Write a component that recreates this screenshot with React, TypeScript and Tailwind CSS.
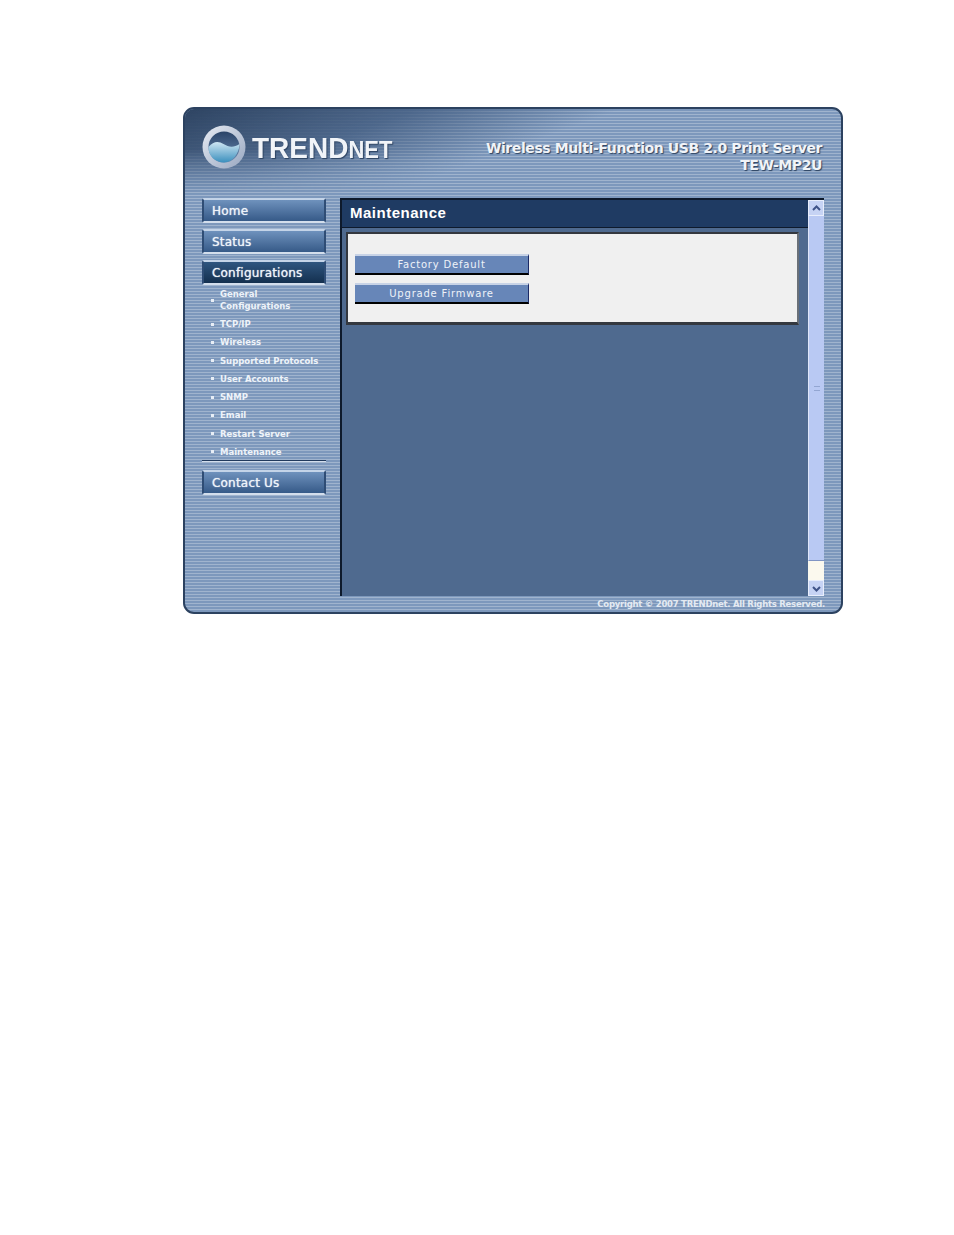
import React from "react";

const stripes =
  "bg-[repeating-linear-gradient(180deg,#7d98bc_0px,#7d98bc_2px,#a0b4ce_2px,#a0b4ce_3px)]";

function NavButton({ label, active }: { label: string; active?: boolean }) {
  return (
    <div
      className={`h-[25px] w-[124px] border-t-2 border-b-2 border-t-[#c4d4e8] border-b-[#d3deec] border-l-2 border-r-2 border-l-[#2f4d75] border-r-[#2f4d75] pl-[8px] flex items-center text-[12px] tracking-[0.2px] font-['DejaVu_Sans',sans-serif] text-[#eef3f9] [text-shadow:0_0_1px_#eef3f9] rounded-[2px] ${
        active
          ? "bg-gradient-to-b from-[#2f5680] to-[#14304f]"
          : "bg-gradient-to-b from-[#6f92bd] to-[#365a88]"
      }`}
    >
      {label}
    </div>
  );
}

function SubItem({ children, tall }: { children: React.ReactNode; tall?: boolean }) {
  return (
    <div className={`flex items-center pl-[9px] ${tall ? "h-[30px]" : "h-[18.25px]"}`}>
      <span className="mr-[6px] h-[3px] w-[3px] shrink-0 bg-[#e8eef6]" />
      <span className="text-[8.5px] leading-[12px] font-bold text-[#eef3f9] font-['DejaVu_Sans',sans-serif]">
        {children}
      </span>
    </div>
  );
}

function ActionButton({ label }: { label: string }) {
  return (
    <div className="h-[21px] w-[174px] bg-[#6786b8] border-t-2 border-t-[#c8d3e6] border-b-2 border-b-black border-r border-r-[#1c2a66] flex items-center justify-center text-[10px] tracking-[0.8px] text-[#eef2f8] font-['DejaVu_Sans',sans-serif]">
      {label}
    </div>
  );
}

function Logo() {
  return (
    <svg width="46" height="48" viewBox="0 0 46 48" className="shrink-0">
      <defs>
        <linearGradient id="ring" x1="0" y1="0" x2="1" y2="1">
          <stop offset="0" stopColor="#e8ecf3" />
          <stop offset="1" stopColor="#97a6c0" />
        </linearGradient>
        <linearGradient id="sky" x1="0" y1="0" x2="0" y2="1">
          <stop offset="0" stopColor="#2b4468" />
          <stop offset="1" stopColor="#6d8cb4" />
        </linearGradient>
        <linearGradient id="sea" x1="0" y1="0" x2="0" y2="1">
          <stop offset="0" stopColor="#cfe6f3" />
          <stop offset="1" stopColor="#3a8fbd" />
        </linearGradient>
      </defs>
      <circle cx="23" cy="24" r="21.5" fill="url(#ring)" />
      <circle cx="23" cy="24" r="15.5" fill="url(#sky)" />
      <path d="M7.500 24c5-6 10-6 15-3s10 4 16 0c0 9-7 18.500-15.500 18.500S7 33 7.500 24z" fill="url(#sea)" />
    </svg>
  );
}

function Arrow({ up }: { up?: boolean }) {
  return (
    <div className="h-[16px] w-[16px] bg-[#c6d3f4] border border-[#e8eefc] flex items-center justify-center">
      <svg width="9" height="7" viewBox="0 0 9 7">
        <path d={up ? "M1 5l3.500-3.500L8 5" : "M1 2l3.500 3.500L8 2"} fill="none" stroke="#3f5488" strokeWidth="2" />
      </svg>
    </div>
  );
}

export default function App() {
  return (
    <div className="h-[1235px] w-[954px] bg-white pt-[107px] pl-[183px]">
      <div className={`relative h-[507px] w-[660px] overflow-hidden rounded-[11px] border-2 border-[#2c4260] flex flex-col ${stripes}`}>
        <div className="absolute left-0 top-0 h-[90px] w-[480px] bg-[linear-gradient(160deg,#2e4462_0%,rgba(66,92,128,0.82)32%,rgba(90,115,150,0)60%)] [mask-image:linear-gradient(180deg,#000_45%,transparent_95%)]" />
        <header className="relative h-[89px] shrink-0 flex items-start justify-between pr-[19px]">
          <div className="flex items-center pl-[16px] pt-[14px]">
            <Logo />
            <span className="ml-[5px] mt-[3px] font-['Liberation_Sans',sans-serif] font-bold text-[28px] leading-[40px] text-[#f1f4f8] [text-shadow:1px_1px_1px_#2c4260] [transform:scaleY(1.08)]">
              TREND<span className="text-[22px]">NET</span>
            </span>
          </div>
          <div className="pt-[31px] text-right font-['DejaVu_Sans',sans-serif] font-bold text-[14px] leading-[17px] text-[#f1f4f8] [text-shadow:1px_1px_1px_#2c4260]">
            <div className="tracking-[-0.4px]">Wireless Multi-Function USB 2.0 Print Server</div>
            <div className="tracking-[-0.4px]">TEW-MP2U</div>
          </div>
        </header>

        <div className="relative flex flex-1 min-h-0">
          <nav className="w-[155px] shrink-0 pl-[17px]">
            <NavButton label="Home" />
            <div className="h-[6px]" />
            <NavButton label="Status" />
            <div className="h-[6px]" />
            <NavButton label="Configurations" active />
            <div>
              <SubItem tall>
                General
                <br />
                Configurations
              </SubItem>
              <SubItem>TCP/IP</SubItem>
              <SubItem>Wireless</SubItem>
              <SubItem>Supported Protocols</SubItem>
              <SubItem>User Accounts</SubItem>
              <SubItem>SNMP</SubItem>
              <SubItem>Email</SubItem>
              <SubItem>Restart Server</SubItem>
              <SubItem>Maintenance</SubItem>
            </div>
            <div className="-mt-[1px] h-[2px] w-[124px] bg-[#20395c] border-b border-[#d3deec]" />
            <div className="h-[8px]" />
            <NavButton label="Contact Us" />
          </nav>

          <main className="flex h-[398px] w-[484px] border-l-2 border-t-2 border-l-[#0e1a2c] border-t-[#0e1a2c] bg-[#4f6a8f]">
            <div className="flex-1 min-w-0">
              <div className="h-[28px] bg-[#1f3b63] border-b border-[#0e1a2c] pl-[8px] flex items-center text-[15px] font-bold text-white font-['Liberation_Sans',sans-serif] tracking-[0.5px]">
                Maintenance
              </div>
              <div className="ml-[4px] mt-[4px] h-[93px] w-[453px] border-2 border-[#34383f] border-b-[3px] border-r-[#6a7078] border-b-[#34383f] bg-[#f0f0f0] pl-[7px] pt-[20px] flex flex-col gap-[8px]">
                <ActionButton label="Factory Default" />
                <ActionButton label="Upgrade Firmware" />
              </div>
            </div>
            <div className="w-[16px] shrink-0 flex flex-col bg-[#fbf9ee]">
              <Arrow up />
              <div className="h-[345px] bg-[#b9c9f3] border-l border-l-[#dfe6fa] border-b border-b-[#8095c4] flex items-center justify-center">
                <div className="h-[5px] w-[6px] border-y border-[#93a6d2]" />
              </div>
              <div className="flex-1" />
              <Arrow />
            </div>
          </main>
        </div>

        <div className="absolute bottom-[1px] right-[16px] text-[8.5px] font-bold text-[#e4eaf2] font-['DejaVu_Sans',sans-serif] tracking-[-0.25px]">
          Copyright © 2007 TRENDnet. All Rights Reserved.
        </div>
      </div>
    </div>
  );
}
